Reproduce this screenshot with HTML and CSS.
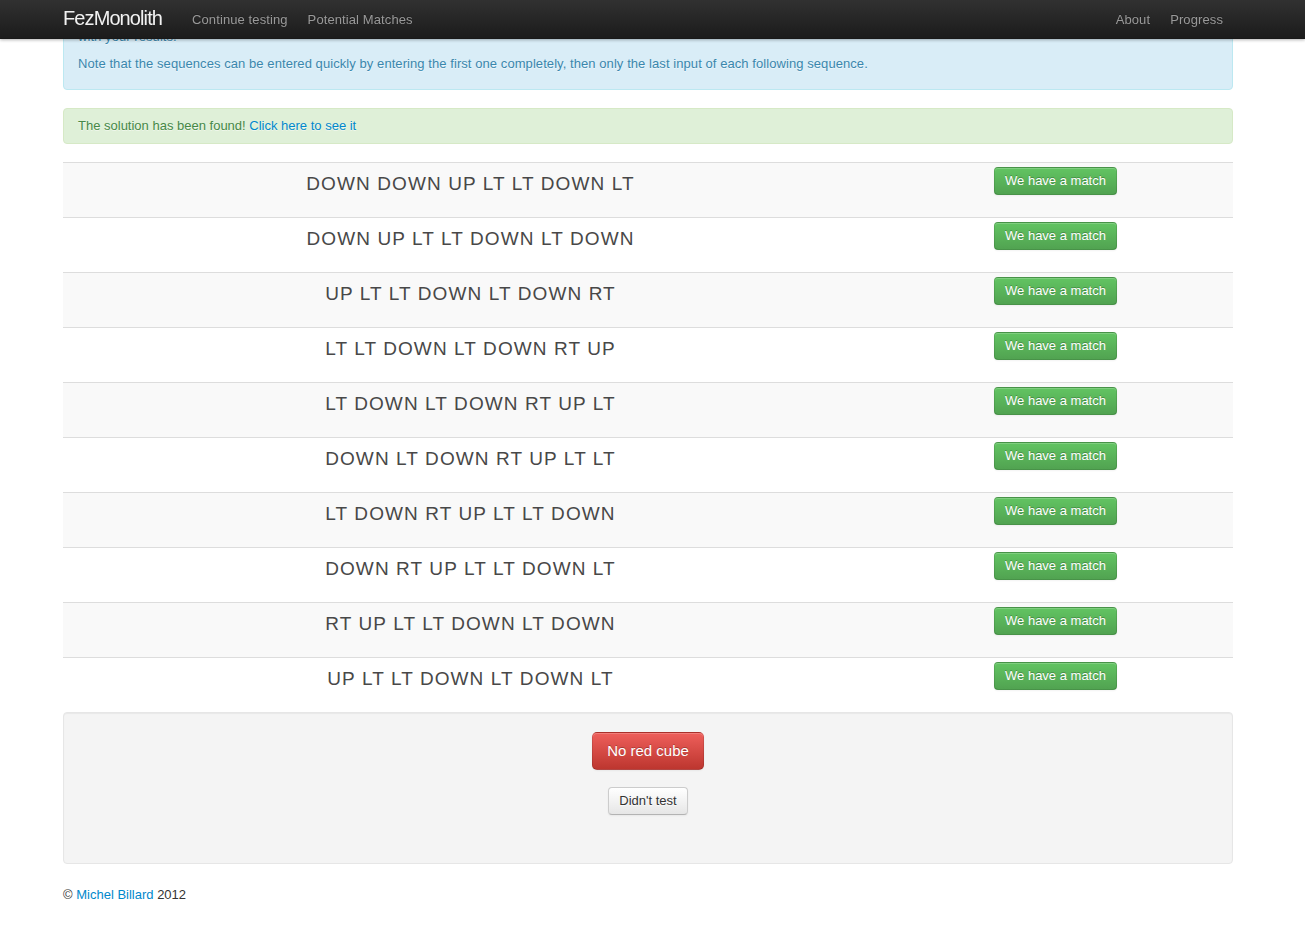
FILE: index.html
```html
<!DOCTYPE html>
<html lang="en">
<head>
<meta charset="utf-8">
<title>FezMonolith</title>
<link rel="stylesheet" href="styles.css">
</head>
<body>
<div class="navbar">
  <div class="navbar-inner">
    <div class="container nav-row">
      <a class="brand" href="#">FezMonolith</a>
      <ul class="nav">
        <li><a href="#">Continue testing</a></li>
        <li><a href="#">Potential Matches</a></li>
      </ul>
      <ul class="nav nav-right">
        <li><a href="#">About</a></li>
        <li><a href="#">Progress</a></li>
      </ul>
    </div>
  </div>
</div>

<div class="container main">
  <div class="alert alert-info">
    <p>with your results.</p>
    <p>Note that the sequences can be entered quickly by entering the first one completely, then only the last input of each following sequence.</p>
  </div>

  <div class="alert alert-success">
    The solution has been found! <a href="#">Click here to see it</a>
  </div>

  <div class="table">
    <div class="tr odd"><div class="seq">DOWN DOWN UP LT LT DOWN LT</div><div class="act"><button class="btn btn-success">We have a match</button></div></div>
    <div class="tr"><div class="seq">DOWN UP LT LT DOWN LT DOWN</div><div class="act"><button class="btn btn-success">We have a match</button></div></div>
    <div class="tr odd"><div class="seq">UP LT LT DOWN LT DOWN RT</div><div class="act"><button class="btn btn-success">We have a match</button></div></div>
    <div class="tr"><div class="seq">LT LT DOWN LT DOWN RT UP</div><div class="act"><button class="btn btn-success">We have a match</button></div></div>
    <div class="tr odd"><div class="seq">LT DOWN LT DOWN RT UP LT</div><div class="act"><button class="btn btn-success">We have a match</button></div></div>
    <div class="tr"><div class="seq">DOWN LT DOWN RT UP LT LT</div><div class="act"><button class="btn btn-success">We have a match</button></div></div>
    <div class="tr odd"><div class="seq">LT DOWN RT UP LT LT DOWN</div><div class="act"><button class="btn btn-success">We have a match</button></div></div>
    <div class="tr"><div class="seq">DOWN RT UP LT LT DOWN LT</div><div class="act"><button class="btn btn-success">We have a match</button></div></div>
    <div class="tr odd"><div class="seq">RT UP LT LT DOWN LT DOWN</div><div class="act"><button class="btn btn-success">We have a match</button></div></div>
    <div class="tr"><div class="seq">UP LT LT DOWN LT DOWN LT</div><div class="act"><button class="btn btn-success">We have a match</button></div></div>
  </div>

  <div class="well">
    <button class="btn btn-large btn-danger">No red cube</button>
    <button class="btn">Didn't test</button>
  </div>

  <footer class="footer">
    &copy; <a href="#">Michel Billard</a> 2012
  </footer>
</div>
</body>
</html>
```

FILE: styles.css
```css
* { box-sizing: border-box; }

html, body {
  margin: 0;
  padding: 0;
}

body {
  font-family: "Liberation Sans", Arial, Helvetica, sans-serif;
  font-size: 13px;
  line-height: 18px;
  color: #333;
  background: #fff;
  padding-right: 9px;
}

a { color: #0088cc; text-decoration: none; }

.container {
  width: 1170px;
  margin: 0 auto;
}

/* Navbar */
.navbar {
  position: fixed;
  top: 0;
  left: 0;
  right: 0;
  z-index: 10;
}

.navbar-inner {
  height: 39px;
  padding-right: 9px;
  background: linear-gradient(to bottom, #313131, #1b1b1b);
  box-shadow: 0 1px 3px rgba(0,0,0,0.3), inset 0 -1px 0 rgba(0,0,0,0.1);
}

.nav-row {
  display: flex;
  align-items: flex-start;
}

.brand {
  display: block;
  padding: 8px 20px 11px 0;
  font-size: 20px;
  line-height: 20px;
  font-weight: 200;
  color: #f2f2f2;
  letter-spacing: -0.9px;
}

.nav {
  display: flex;
  list-style: none;
  margin: 0;
  padding: 0;
}

.nav-right { margin-left: auto; }

.nav a {
  display: block;
  padding: 10px 10px 10px;
  line-height: 19px;
  font-size: 13px;
  color: #999;
  letter-spacing: 0.1px;
  text-shadow: 0 -1px 0 rgba(0,0,0,0.25);
}

/* Main */
.main {
  padding-top: 19px;
}

.alert {
  padding: 8px 35px 8px 14px;
  margin-bottom: 18px;
  border: 1px solid;
  border-radius: 4px;
  text-shadow: 0 1px 0 rgba(255,255,255,0.5);
}

.alert p { margin: 0 0 9px; }
.alert p:last-child { margin-bottom: 8px; }

.alert-info {
  background: #d9edf7;
  border-color: #bce8f1;
  color: #3a87ad;
  letter-spacing: 0.07px;
}

.alert-success {
  background: #dff0d8;
  border-color: #d6e9c6;
  color: #468847;
}

/* Table */
.tr {
  display: grid;
  grid-template-columns: 815px 355px;
  height: 55px;
  border-top: 1px solid #dddddd;
  background: #fff;
}

.tr.odd { background: #f9f9f9; }

.seq {
  text-align: center;
  padding-top: 10px;
  font-size: 19px;
  line-height: 22px;
  letter-spacing: 1.1px;
  color: #484848;
}

.act {
  display: flex;
  justify-content: center;
  align-items: flex-start;
  padding-top: 4px;
}

/* Buttons */
.btn {
  display: inline-block;
  font-family: inherit;
  font-size: 13px;
  line-height: 18px;
  padding: 4px 10px;
  color: #333;
  text-shadow: 0 1px 1px rgba(255,255,255,0.75);
  background: linear-gradient(to bottom, #ffffff, #e6e6e6);
  border: 1px solid #cccccc;
  border-bottom-color: #b3b3b3;
  border-radius: 4px;
  box-shadow: inset 0 1px 0 rgba(255,255,255,0.2), 0 1px 2px rgba(0,0,0,0.05);
  cursor: pointer;
}

.btn-success {
  color: #fff;
  text-shadow: 0 -1px 0 rgba(0,0,0,0.25);
  background: linear-gradient(to bottom, #62c462, #51a351);
  border-color: rgba(0,0,0,0.1) rgba(0,0,0,0.1) rgba(0,0,0,0.25);
}

.btn-danger {
  color: #fff;
  text-shadow: 0 -1px 0 rgba(0,0,0,0.25);
  background: linear-gradient(to bottom, #ee5f5b, #bd362f);
  border-color: rgba(0,0,0,0.1) rgba(0,0,0,0.1) rgba(0,0,0,0.25);
}

.btn-large {
  font-size: 15px;
  line-height: 18px;
  padding: 9px 14px;
  border-radius: 5px;
}

/* Well */
.well {
  display: flex;
  flex-direction: column;
  align-items: center;
  gap: 17px;
  height: 152px;
  padding: 19px;
  background: #f4f4f4;
  border: 1px solid #e6e6e6;
  border-radius: 4px;
  box-shadow: inset 0 1px 1px rgba(0,0,0,0.05);
}

/* Footer */
.footer {
  margin-top: 22px;
  line-height: 18px;
  color: #333;
}
```
